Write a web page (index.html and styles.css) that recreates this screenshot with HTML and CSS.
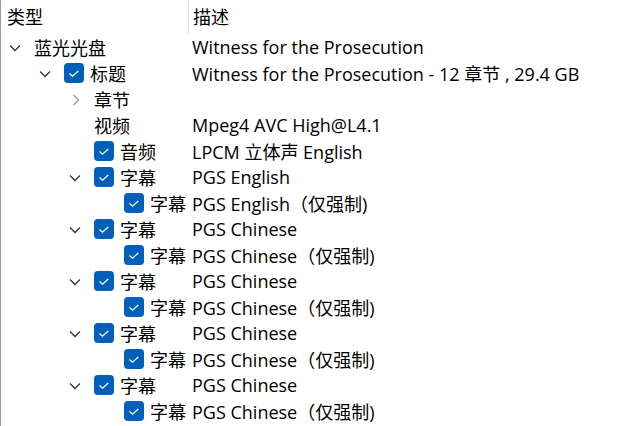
FILE: index.html
```html
<!DOCTYPE html>
<html lang="zh-CN">

<head>
    <meta charset="UTF-8">
    <title>光盘内容</title>
    <link rel="stylesheet" href="styles.css">
</head>

<body>
    <div class="tree">
        <div class="head">
            <div class="name">类型</div>
            <div class="desc">描述</div>
        </div>

        <div class="row lvl-0">
            <div class="name"><span class="exp open"></span><span class="label">蓝光光盘</span></div>
            <div class="desc">Witness for the Prosecution</div>
        </div>
        <div class="row lvl-1">
            <div class="name"><span class="exp open"></span><span class="chk"></span><span class="label">标题</span></div>
            <div class="desc">Witness for the Prosecution - 12 章节 , 29.4 GB</div>
        </div>
        <div class="row lvl-2">
            <div class="name"><span class="exp closed"></span><span class="label">章节</span></div>
            <div class="desc"></div>
        </div>
        <div class="row lvl-2">
            <div class="name"><span class="exp"></span><span class="label">视频</span></div>
            <div class="desc">Mpeg4 AVC High@L4.1</div>
        </div>
        <div class="row lvl-2">
            <div class="name"><span class="exp"></span><span class="chk"></span><span class="label">音频</span></div>
            <div class="desc">LPCM 立体声 English</div>
        </div>
        <div class="row lvl-2">
            <div class="name"><span class="exp open"></span><span class="chk"></span><span class="label">字幕</span></div>
            <div class="desc">PGS English</div>
        </div>
        <div class="row lvl-3">
            <div class="name"><span class="exp"></span><span class="chk"></span><span class="label">字幕</span></div>
            <div class="desc">PGS English（仅强制)</div>
        </div>
        <div class="row lvl-2">
            <div class="name"><span class="exp open"></span><span class="chk"></span><span class="label">字幕</span></div>
            <div class="desc">PGS Chinese</div>
        </div>
        <div class="row lvl-3">
            <div class="name"><span class="exp"></span><span class="chk"></span><span class="label">字幕</span></div>
            <div class="desc">PGS Chinese（仅强制)</div>
        </div>
        <div class="row lvl-2">
            <div class="name"><span class="exp open"></span><span class="chk"></span><span class="label">字幕</span></div>
            <div class="desc">PGS Chinese</div>
        </div>
        <div class="row lvl-3">
            <div class="name"><span class="exp"></span><span class="chk"></span><span class="label">字幕</span></div>
            <div class="desc">PGS Chinese（仅强制)</div>
        </div>
        <div class="row lvl-2">
            <div class="name"><span class="exp open"></span><span class="chk"></span><span class="label">字幕</span></div>
            <div class="desc">PGS Chinese</div>
        </div>
        <div class="row lvl-3">
            <div class="name"><span class="exp"></span><span class="chk"></span><span class="label">字幕</span></div>
            <div class="desc">PGS Chinese（仅强制)</div>
        </div>
        <div class="row lvl-2">
            <div class="name"><span class="exp open"></span><span class="chk"></span><span class="label">字幕</span></div>
            <div class="desc">PGS Chinese</div>
        </div>
        <div class="row lvl-3">
            <div class="name"><span class="exp"></span><span class="chk"></span><span class="label">字幕</span></div>
            <div class="desc">PGS Chinese（仅强制)</div>
        </div>
    </div>
</body>

</html>
```

FILE: styles.css
```css
    html,
    body {
        margin: 0;
        padding: 0;
        background-color: #ffffff;
        height: 100%;
    }

    body {
        font-family: "Open Sans", "Noto Sans CJK SC", sans-serif;
        font-size: 18px;
        color: #000000;
        overflow: hidden;
    }

    .tree {
        border-left: 1px solid #9a9a9a;
        min-height: 100%;
        box-sizing: border-box;
    }

    .head,
    .row {
        display: flex;
        align-items: center;
        white-space: nowrap;
    }

    .head {
        height: 34px;
    }

    .head .name {
        padding-left: 6px;
        height: 34px;
        line-height: 33px;
        border-right: 1px solid #e3e3e3;
        width: 188px;
    }

    .head .desc {
        padding-left: 4px;
        line-height: 33px;
    }

    .row {
        height: 26px;
    }

    .name {
        flex: none;
        width: 191px;
        display: flex;
        align-items: center;
        box-sizing: border-box;
    }

    .lvl-1 .name { padding-left: 30px; }
    .lvl-2 .name { padding-left: 60px; }
    .lvl-3 .name { padding-left: 90px; }

    .desc {
        flex: 1;
    }

    .exp {
        width: 33px;
        height: 26px;
        flex: none;
        background-repeat: no-repeat;
    }

    .exp.open {
        background-image: url("data:image/svg+xml,%3Csvg xmlns='http://www.w3.org/2000/svg' width='12' height='8'%3E%3Cpolyline points='1,1.5 6,6.5 11,1.5' fill='none' stroke='%23333' stroke-width='1.3'/%3E%3C/svg%3E");
        background-position: 8px 10px;
    }

    .exp.closed {
        background-image: url("data:image/svg+xml,%3Csvg xmlns='http://www.w3.org/2000/svg' width='8' height='12'%3E%3Cpolyline points='1.5,1 6.5,6 1.5,11' fill='none' stroke='%23999' stroke-width='1.3'/%3E%3C/svg%3E");
        background-position: 11px 8px;
    }

    .chk {
        flex: none;
        width: 20px;
        height: 20px;
        margin-right: 6px;
        border-radius: 4px;
        background-color: #005fb8;
        background-image: url("data:image/svg+xml,%3Csvg xmlns='http://www.w3.org/2000/svg' width='20' height='20'%3E%3Cpolyline points='5.5,10.5 8.5,13.3 14.3,8' fill='none' stroke='%23fff' stroke-width='1.2'/%3E%3C/svg%3E");
    }

    .label {
        overflow: visible;
    }
```
